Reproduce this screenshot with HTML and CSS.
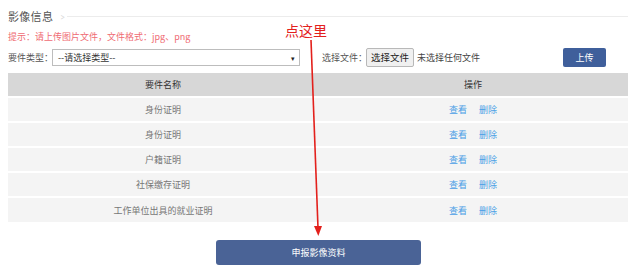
FILE: index.html
```html
<!DOCTYPE html>
<html lang="zh-CN">
<head>
  <meta charset="UTF-8" />
  <title>影像信息</title>
  <link rel="stylesheet" href="styles.css">
</head>
<body>
  <div class="page">

    <!-- Section title -->
    <div class="title-bar">
      <span class="title">影像信息</span>
      <span class="chevron">&gt;</span>
      <span class="title-line"></span>
    </div>

    <p class="hint">提示：请上传图片文件，文件格式：jpg、png</p>

    <!-- Upload form -->
    <div class="form-row">
      <label class="label">要件类型：</label>
      <div class="select">
        <span>--请选择类型--</span>
        <span class="caret">&#9662;</span>
      </div>
      <label class="label file-label">选择文件：</label>
      <span class="file-btn">选择文件</span>
      <span class="file-name">未选择任何文件</span>
      <span class="upload-btn">上传</span>
    </div>

    <!-- Documents table -->
    <table class="doc-table">
      <thead>
        <tr><th>要件名称</th><th>操作</th></tr>
      </thead>
      <tbody>
        <tr><td>身份证明</td><td><a>查看</a><a>删除</a></td></tr>
        <tr><td>身份证明</td><td><a>查看</a><a>删除</a></td></tr>
        <tr><td>户籍证明</td><td><a>查看</a><a>删除</a></td></tr>
        <tr><td>社保缴存证明</td><td><a>查看</a><a>删除</a></td></tr>
        <tr><td>工作单位出具的就业证明</td><td><a>查看</a><a>删除</a></td></tr>
      </tbody>
    </table>

    <div class="submit-wrap">
      <span class="submit-btn">申报影像资料</span>
    </div>

    <!-- Annotation -->
    <span class="note">点这里</span>
    <svg class="arrow" width="640" height="278" viewBox="0 0 640 278">
      <line x1="311" y1="40" x2="318" y2="228" stroke="#e3201c" stroke-width="1.6" />
      <polygon points="314,226 322,226 318.3,236" fill="#e3201c" />
    </svg>
  </div>
</body>
</html>
```

FILE: styles.css
```css
* {
  margin: 0;
  padding: 0;
  box-sizing: border-box;
}
body {
  font-family: "Noto Sans CJK SC", "Liberation Sans", sans-serif;
  font-size: 9px;
  color: #555;
  background: #fff;
}
.page {
  position: relative;
  width: 640px;
  height: 278px;
  padding: 6px 12px 0 8px;
}

/* Title */
.title-bar {
  display: flex;
  align-items: center;
  height: 20px;
}
.title {
  font-size: 11px;
  color: #555;
  letter-spacing: 0.3px;
}
.chevron {
  margin-left: 7px;
  font-size: 10px;
  color: #d8d8d8;
  transform: scaleX(0.7);
}
.title-line {
  flex: 1;
  height: 1px;
  margin-left: 1px;
  background: #ececec;
}

.hint {
  margin-top: 4px;
  line-height: 14px;
  color: #ef6b73;
}

/* Form row */
.form-row {
  display: flex;
  align-items: center;
  height: 19px;
  margin-top: 4px;
  white-space: nowrap;
}
.label {
  color: #555;
  width: 44px;
  flex: none;
}
.select {
  display: flex;
  justify-content: space-between;
  align-items: center;
  width: 248px;
  height: 17px;
  padding: 0 4px 0 5px;
  border: 1px solid #bdbdbd;
  color: #333;
}
.caret {
  font-size: 7px;
  color: #222;
}
.file-label {
  margin-left: 22px;
}
.file-btn {
  height: 19px;
  line-height: 17px;
  padding: 0 4px;
  border: 1px solid #b8b8b8;
  border-radius: 2px;
  background: #f0f0f0;
  color: #222;
  font-size: 9.5px;
}
.file-name {
  margin-left: 3px;
  color: #444;
}
.upload-btn {
  margin-left: auto;
  margin-right: 22px;
  width: 43px;
  height: 19px;
  line-height: 19px;
  text-align: center;
  border-radius: 2px;
  background: #3f5f9b;
  color: #fff;
}

/* Table */
.doc-table {
  width: 620px;
  margin-top: 6px;
  border-collapse: collapse;
  table-layout: fixed;
}
.doc-table th {
  height: 24px;
  background: #d7d7d7;
  font-weight: normal;
  color: #333;
}
.doc-table td {
  height: 25px;
  background: #f4f4f4;
  border-top: 2px solid #fff;
  text-align: center;
  color: #777;
}
.doc-table a {
  color: #4a9ee6;
  margin: 0 6px;
}

/* Submit */
.submit-wrap {
  margin-top: 18px;
  padding-left: 208px;
}
.submit-btn {
  display: block;
  width: 205px;
  height: 25px;
  line-height: 25px;
  text-align: center;
  border-radius: 3px;
  background: #4a6396;
  color: #fff;
}

/* Annotation overlay */
.note {
  position: absolute;
  left: 285px;
  top: 20px;
  font-size: 14px;
  color: #e3201c;
}
.arrow {
  position: absolute;
  left: 0;
  top: 0;
  pointer-events: none;
}
```
